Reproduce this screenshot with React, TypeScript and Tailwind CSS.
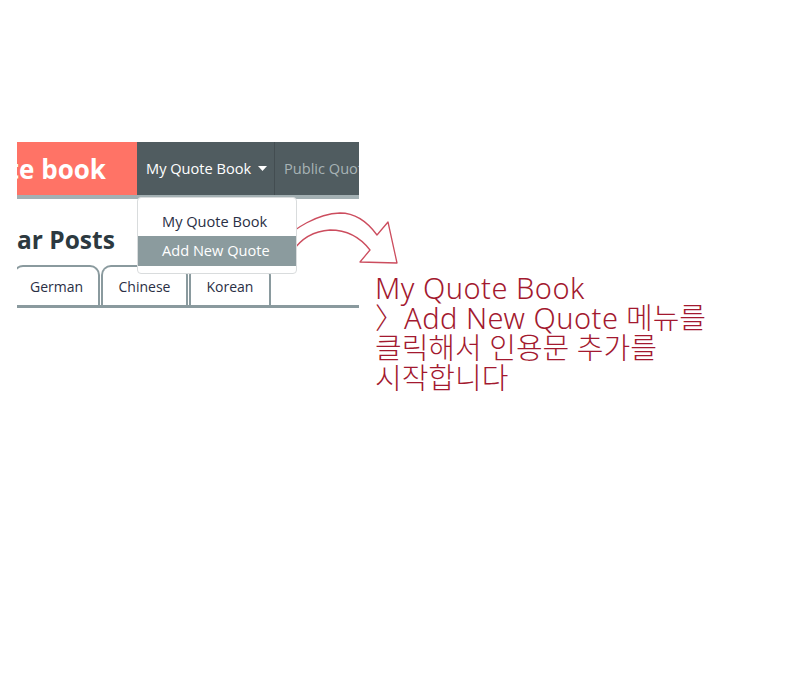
import React from "react";

const ui = { fontFamily: '"Open Sans", "Liberation Sans", sans-serif' };
const kr = { fontFamily: '"Noto Sans", "Noto Sans CJK KR", sans-serif' };

function Caret() {
  return (
    <svg width="9" height="5" viewBox="0 0 9 5" className="ml-[7px]">
      <path d="M0 0 L9 0 L4.5 5 Z" fill="#ffffff" />
    </svg>
  );
}

export default function App() {
  return (
    <div className="relative w-[794px] h-[692px] bg-white" style={ui}>
      <div className="flex items-start pt-[142px] pl-[17px]">
        {/* Left clipped page */}
        <div className="w-[342px] flex flex-col">
          {/* navbar */}
          <div className="flex h-[53px] w-[342px] overflow-visible">
            <div className="w-[120px] h-full bg-[#ff7366] flex items-center justify-end pr-[31px] overflow-hidden">
              <span className="whitespace-nowrap text-white font-bold text-[26px] leading-none">My Quote book</span>
            </div>
            <div className="relative w-[138px] h-full bg-[#505c60] flex items-center pl-[9px] border-r border-[#434d51]">
              <span className="text-white text-[14.6px] whitespace-nowrap">My Quote Book</span>
              <Caret />
              {/* dropdown menu */}
              <div className="absolute left-[0px] top-[55px] w-[160px] h-[77px] bg-white border border-[#d9dcdd] rounded-[4px] flex flex-col pt-[9px] z-10">
                <div className="h-[29px] pl-[24px] flex items-center text-[14.6px] text-[#2a2f45] whitespace-nowrap">My Quote Book</div>
                <div className="h-[30px] pl-[24px] flex items-center text-[14.6px] text-white bg-[#8b9b9e] whitespace-nowrap">Add New Quote</div>
              </div>
            </div>
            <div className="flex-1 h-full bg-[#505c60] flex items-center pl-[9px] overflow-hidden">
              <span className="text-[#a7b3b5] text-[14.6px] whitespace-nowrap">Public Quotes</span>
            </div>
          </div>
          <div className="h-[4px] w-[342px] bg-[#a3b0b3]" />
          {/* heading */}
          <div className="h-[66px] overflow-hidden">
            <div className="pt-[25px] text-[24.5px] leading-[32px] font-bold text-[#2c3940] whitespace-nowrap">ar Posts</div>
          </div>
          {/* tabs */}
          <div className="w-[342px] overflow-hidden">
            <div className="flex items-end h-[40px] gap-[1px] ml-[-4px]">
              <div className="w-[87px] h-[40px] border-2 border-b-0 border-[#8a9a9e] rounded-t-[10px] flex items-center justify-center text-[14px] text-[#2a2f45]">German</div>
              <div className="w-[87px] h-[40px] border-2 border-b-0 border-[#8a9a9e] rounded-t-[10px] flex items-center justify-center text-[14px] text-[#2a2f45]">Chinese</div>
              <div className="w-[82px] h-[40px] border-2 border-b-0 border-[#8a9a9e] rounded-t-[10px] flex items-center justify-center text-[14px] text-[#2a2f45]">Korean</div>
            </div>
          </div>
          <div className="h-[3px] w-[342px] bg-[#8a9a9e]" />
        </div>
        {/* annotation */}
        <div className="ml-[16px] mt-[131px] text-[29px] leading-[30px] font-light text-[#a3192f] whitespace-nowrap" style={kr}>
          <div className="tracking-[0.5px]">My Quote Book</div>
          <div>〉<span className="tracking-[0.5px]">Add New Quote</span> 메뉴를</div>
          <div>클릭해서 인용문 추가를</div>
          <div>시작합니다</div>
        </div>
      </div>
      {/* arrow overlay */}
      <svg className="absolute left-0 top-0 pointer-events-none" width="794" height="692" viewBox="0 0 794 692">
        <path
          d="M278 243 C 296 228, 316 214, 340 213 C 357 213, 369 224, 377 235 L 388 222 L 397 263 L 360 262 L 370 250 C 360 237, 346 230, 330 230 C 313 231, 300 240, 292 252 Z"
          fill="none"
          stroke="#cc4d5e"
          strokeWidth="1.3"
          strokeLinejoin="round"
        />
      </svg>
    </div>
  );
}
